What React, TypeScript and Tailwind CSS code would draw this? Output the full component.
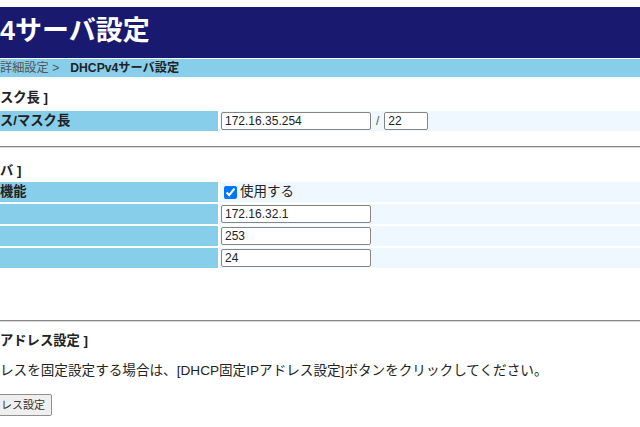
import React from "react";

const font = { fontFamily: '"Liberation Sans", "Noto Sans CJK JP", sans-serif' };

function Input({ value, w = "w-[150px]" }: { value: string; w?: string }) {
  return (
    <input
      readOnly
      value={value}
      className={`${w} h-[18px] border border-[#858585] rounded-[2px] bg-white px-[3px] text-[12px] text-[#222] outline-none`}
      style={font}
    />
  );
}

function Row({ label, children }: { label?: string; children: React.ReactNode }) {
  return (
    <div className="flex h-[20px] gap-[2px]">
      <div className="w-[218px] bg-[#87ceeb] flex items-center text-[13.3px] font-bold text-[#222] whitespace-nowrap overflow-hidden">
        {label}
      </div>
      <div className="flex-1 bg-[#f0f8ff] flex items-center pl-[1px]">{children}</div>
    </div>
  );
}

function Hr() {
  return <div className="h-[2px] bg-[#8a8a8a] border-b border-[#d8d8d8]" />;
}

export default function App() {
  return (
    <div className="w-[640px] h-[427px] overflow-hidden bg-white" style={font}>
      <div className="h-[7px]" />
      <div className="h-[51px] bg-[#191970] flex items-center text-white font-bold text-[27px] whitespace-nowrap pb-[2px]">
        4サーバ設定
      </div>
      <div className="h-[1px]" />
      <div className="h-[18px] bg-[#87ceeb] flex items-center text-[12.2px] whitespace-nowrap">
        <span className="text-[#555]">詳細設定 &gt;</span>
        <span className="ml-[11px] font-bold text-[#222]">DHCPv4サーバ設定</span>
      </div>

      <div className="mt-[12px] h-[18px] flex items-center text-[13.3px] font-bold text-[#222]">スク長 ]</div>
      <div className="mt-[4px]">
        <Row label="ス/マスク長">
          <Input value="172.16.35.254" />
          <span className="mx-[5px] text-[12px] text-[#555]">/</span>
          <Input value="22" w="w-[44px]" />
        </Row>
      </div>

      <div className="mt-[15px]">
        <Hr />
      </div>

      <div className="mt-[14px] h-[18px] flex items-center text-[13.3px] font-bold text-[#222]">バ ]</div>
      <div className="mt-[2px] flex flex-col gap-[2px]">
        <Row label="機能">
          <label className="flex items-center text-[13.5px] text-[#222]">
            <input type="checkbox" checked readOnly className="w-[13px] h-[13px] ml-[3px] mr-[3px] accent-[#0075ff]" />
            使用する
          </label>
        </Row>
        <Row>
          <Input value="172.16.32.1" />
        </Row>
        <Row>
          <Input value="253" />
        </Row>
        <Row>
          <Input value="24" />
        </Row>
      </div>

      <div className="mt-[52px]">
        <Hr />
      </div>

      <div className="mt-[10px] h-[18px] flex items-center text-[13.3px] font-bold text-[#222]">アドレス設定 ]</div>
      <div className="mt-[12px] h-[19px] flex items-center text-[13.6px] text-[#222] whitespace-nowrap">
        レスを固定設定する場合は、[DHCP固定IPアドレス設定]ボタンをクリックしてください。
      </div>
      <div className="mt-[11px]">
        <button
          className="-ml-[8px] h-[22px] pl-[8px] pr-[6px] border border-[#8f8f8f] rounded-[2px] bg-[#efefef] text-[11px] text-[#333]"
          style={font}
        >
          レス設定
        </button>
      </div>
    </div>
  );
}
